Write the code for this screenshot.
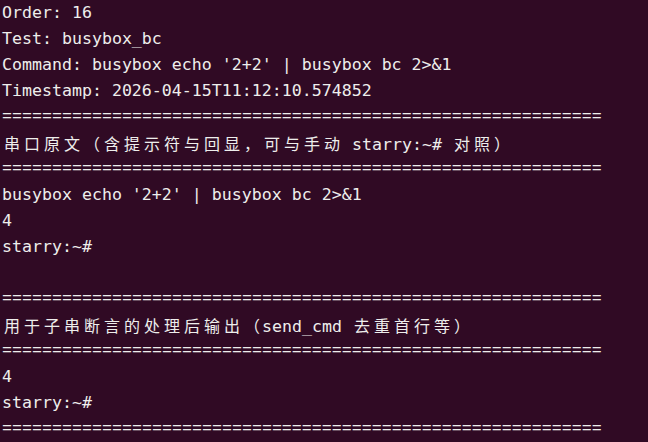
import React from 'react';

const RULE = '='.repeat(60);

const lines: string[] = [
  'Order: 16',
  'Test: busybox_bc',
  "Command: busybox echo '2+2' | busybox bc 2>&1",
  'Timestamp: 2026-04-15T11:12:10.574852',
  RULE,
  '串口原文（含提示符与回显，可与手动 starry:~# 对照）',
  RULE,
  "busybox echo '2+2' | busybox bc 2>&1",
  '4',
  'starry:~#',
  '',
  RULE,
  '用于子串断言的处理后输出（send_cmd 去重首行等）',
  RULE,
  '4',
  'starry:~#',
  RULE,
];

// wide chars take two terminal cells
const isWide = (ch: string) => /[\u3000-\u9fff\uff00-\uffef]/.test(ch);

const TermLine: React.FC<{ text: string }> = ({ text }) => {
  if (text === RULE) {
    return (
      <div className="h-[26px] leading-[26px] whitespace-pre font-['Liberation_Mono',monospace] text-[16.67px]">
        {text}
      </div>
    );
  }
  const parts: React.ReactNode[] = [];
  let buf = '';
  Array.from(text).forEach((ch, i) => {
    if (isWide(ch)) {
      if (buf) {
        parts.push(<span key={`a${i}`}>{buf}</span>);
        buf = '';
      }
      parts.push(
        <span
          key={`w${i}`}
          className="inline-block w-[20px] text-center font-['Noto_Sans_CJK_SC',sans-serif] text-[16px]"
        >
          {ch}
        </span>
      );
    } else {
      buf += ch;
    }
  });
  if (buf) parts.push(<span key="end">{buf}</span>);
  return <div className="h-[26px] leading-[26px] whitespace-pre">{parts}</div>;
};

const App: React.FC = () => {
  return (
    <div className="w-[648px] h-[442px] overflow-hidden bg-[#300a24] text-[#eeeeec] pl-[2px] font-['DejaVu_Sans_Mono',monospace] text-[16.6px]">
      {lines.map((l, idx) => (
        <TermLine key={idx} text={l} />
      ))}
    </div>
  );
};

export default App;
